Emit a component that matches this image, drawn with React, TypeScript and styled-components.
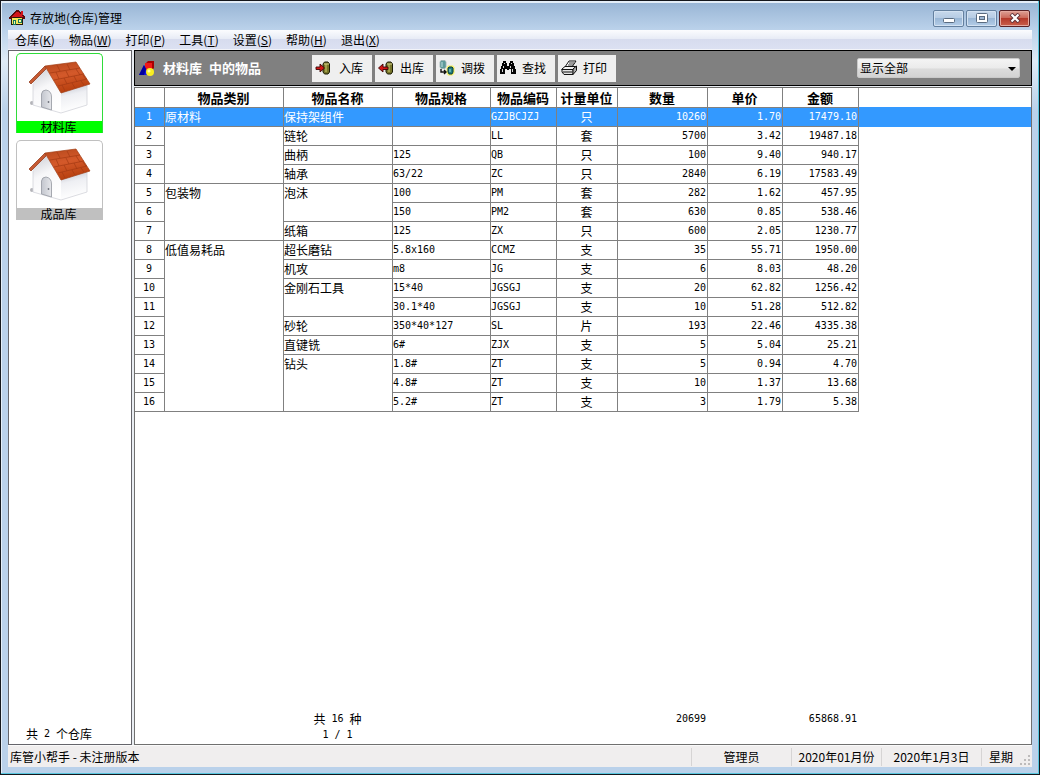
import React from 'react';
import styled, { createGlobalStyle, css } from 'styled-components';

const Global = createGlobalStyle`
  * { box-sizing: border-box; }
  body {
    margin: 0;
    background: #fff;
    color: #000;
    font: 12px/18px 'Noto Sans CJK SC', sans-serif;
  }
  button, select { font: inherit; color: inherit; margin: 0; }
`;

const digits = css`
  font-family: 'DejaVu Sans Mono', 'Noto Sans CJK SC', monospace;
  font-size: 10px;
`;

const Window = styled.div`
  display: flex;
  flex-direction: column;
  min-height: 100vh;
  padding: 0 7px 7px;
  border: 1px solid #15171c;
  background: linear-gradient(#97b4d4, #bad1ea 28px, #dfeaf6 60px, #bad1ea 110px);
  box-shadow: inset -1px -1px #58c6de, inset 1px 2px #e4eef8;
`;

const TitleBar = styled.header`
  display: flex;
  align-items: center;
  height: 29px;
  padding: 5px 2px 0 1px;
`;

const Title = styled.h1`
  flex: 1;
  margin: 0 0 0 5px;
  font-size: 12px;
  font-weight: 400;
`;

const Controls = styled.div`
  display: flex;
  gap: 2px;
`;

const WindowButton = styled.button<{ $danger?: boolean }>`
  display: flex;
  align-items: center;
  justify-content: center;
  width: 31px;
  height: 17px;
  padding: 0;
  border: 1px solid ${p => (p.$danger ? '#5a2226' : '#64809f')};
  border-radius: 2px;
  background: ${p =>
    p.$danger
      ? 'linear-gradient(#dda196, #cc6a5b 45%, #b53a2b 50%, #c9604c)'
      : 'linear-gradient(#c8d9ec, #b6cce4 45%, #9ab7d6 50%, #b4cde8)'};
  box-shadow: inset 0 0 0 1px ${p => (p.$danger ? '#e5a99f' : '#d3e2f2')};
`;

const MenuBar = styled.nav`
  display: flex;
  align-items: center;
  height: 20px;
  border-bottom: 1px solid #f2f3f8;
  background: linear-gradient(#fbfcfe, #e8ecf6 45%, #d7dcee 50%, #dce1f2);
`;

const MenuItem = styled.button`
  padding: 0 7px;
  border: 0;
  background: none;
  line-height: 18px;
`;

const Workspace = styled.main`
  display: flex;
  flex: 1;
  gap: 2px;
  background: #e9edf2;
`;

const Sidebar = styled.aside`
  display: flex;
  flex-direction: column;
  gap: 7px;
  width: 124px;
  padding: 2px 7px 0;
  border: 1px solid #65656b;
  background: #fff;
`;

const StoreCard = styled.button<{ $active?: boolean }>`
  display: flex;
  flex-direction: column;
  width: 87px;
  height: 80px;
  padding: 0;
  border: 1px solid ${p => (p.$active ? '#2fdc3a' : '#c0c0c0')};
  border-bottom: 0;
  border-radius: 5px 5px 0 0;
  background: ${p => (p.$active ? '#0f0' : '#c0c0c0')};
  line-height: 12px;

  svg {
    flex: none;
    border-radius: 4px 4px 0 0;
    background: #fff;
  }
  span {
    align-self: center;
    padding-right: 2px;
  }
`;

const StoreCount = styled.p`
  display: flex;
  gap: 6px;
  margin: auto 0 0;
  padding: 0 10px;
  line-height: 20px;
`;

const Num = styled.span`
  ${digits}
`;

const Content = styled.section`
  display: flex;
  flex: 1;
  flex-direction: column;
  gap: 1px;
  min-width: 0;
`;

const Toolbar = styled.div`
  display: flex;
  align-items: center;
  height: 36px;
  padding: 0 11px 0 4px;
  border: 1px solid #000;
  background: #808080;
`;

const Heading = styled.h2`
  display: flex;
  gap: 7px;
  width: 149px;
  margin: 0 0 0 8px;
  color: #fff;
  font-size: 13px;
  font-weight: 700;
`;

const ToolGroup = styled.div`
  display: flex;
  flex: 1;
  gap: 3px;
`;

const ToolButton = styled.button<{ $wide?: boolean }>`
  display: flex;
  align-items: center;
  justify-content: space-between;
  width: ${p => (p.$wide ? 60 : 58)}px;
  height: 27px;
  padding: 0 9px 0 3px;
  border: 0;
  background: #efefef;
`;

const FilterBox = styled.label`
  position: relative;
  display: flex;
  width: 163px;

  select {
    width: 100%;
    height: 20px;
    padding: 0 2px;
    border: 1px solid #c9c9c9;
    border-radius: 2px;
    appearance: none;
    background: linear-gradient(#f4f4f4, #ebebeb 50%, #dcdcdc 55%, #d2d2d2);
    line-height: 18px;
  }
  svg {
    position: absolute;
    top: 9px;
    right: 4px;
    pointer-events: none;
  }
`;

const ListPanel = styled.div`
  display: flex;
  flex: 1;
  flex-direction: column;
  justify-content: space-between;
  border: 1px solid #70706f;
  background: #fff;
`;

const Table = styled.table`
  width: 100%;
  border-collapse: separate;
  border-spacing: 0;
  table-layout: fixed;
`;

type Align = 'left' | 'center' | 'right';

const HeadCell = styled.th<{ $blank?: boolean }>`
  height: 20px;
  padding: 0 1px 0 0;
  border: 0 solid ${p => (p.$blank ? '#3399ff' : '#808080')};
  border-width: ${p => (p.$blank ? '0 0 1px' : '0 1px 1px 0')};
  font-size: 13px;
  line-height: 19px;
  white-space: nowrap;
`;

const Cell = styled.td<{ $align?: Align; $mono?: boolean; $joined?: boolean }>`
  height: 19px;
  padding: 0 1px 0 0;
  border-right: 1px solid #808080;
  border-bottom: ${p => (p.$joined ? '0' : '1px solid #808080')};
  text-align: ${p => p.$align || 'left'};
  vertical-align: top;
  line-height: 18px;
  white-space: nowrap;
  ${p => p.$mono && digits}
`;

const Filler = styled.td`
  padding: 0;
`;

const Row = styled.tr<{ $selected?: boolean }>`
  ${p => p.$selected && 'background: #3399ff; color: #fff;'}
`;

const TotalCell = styled.td<{ $align?: Align; $mono?: boolean }>`
  height: 16px;
  padding: 0 2px 0 0;
  text-align: ${p => p.$align || 'left'};
  line-height: 16px;
  white-space: nowrap;
  ${p => p.$mono && digits}
`;

const Totals = styled.div`
  padding-bottom: 1px;
`;

const Spaced = styled.span`
  display: flex;
  justify-content: center;
  gap: 6px;
`;

const StatusBar = styled.footer`
  display: flex;
  height: 22px;
  padding: 2px 0 1px 2px;
  border-top: 1px solid #fafafa;
  background: #f0eeee;
`;

const StatusText = styled.span`
  flex: 1;
`;

const StatusCell = styled.span<{ $width: number }>`
  width: ${p => p.$width}px;
  border-left: 1px solid #d6d4d4;
  text-align: center;
`;

const StatusEnd = styled.span`
  display: flex;
  align-items: flex-end;
  justify-content: space-between;
  width: 51px;
  padding-left: 7px;
  border-left: 1px solid #d6d4d4;
`;

const AppIcon = () => (
  <svg width="16" height="16" viewBox="0 0 16 16" shapeRendering="crispEdges">
    <path d="M2 7h12v8H2z" fill="#2a1a08" />
    <path d="M3 8h10v6H3z" fill="#f6e85a" />
    <path d="M4 10h3v5H4zM9 9h4v4H9z" fill="#167a5a" />
    <path d="M5 11h1v3H5zM10 10h2v2h-2z" fill="#fff9a0" />
    <path d="M7 0h2l7 7v2h-2L8 4 2 9H0V7z" fill="#5b0c0c" />
    <path d="M7 2h2l5 5H2zM12 1h2v4h-2z" fill="#d3151b" />
  </svg>
);

const House = () => (
  <svg width="85" height="67" viewBox="0 0 85 67">
    <defs>
      <linearGradient id="roof" x1="0" y1="0" x2="0.3" y2="1">
        <stop offset="0" stopColor="#b5481c" />
        <stop offset="0.5" stopColor="#d4592a" />
        <stop offset="1" stopColor="#b8400f" />
      </linearGradient>
      <linearGradient id="side" x1="0" y1="0" x2="0.2" y2="1">
        <stop offset="0" stopColor="#b4b8c6" />
        <stop offset="0.45" stopColor="#eeeff3" />
        <stop offset="1" stopColor="#fff" />
      </linearGradient>
      <linearGradient id="front" x1="0" y1="0" x2="0.3" y2="1">
        <stop offset="0" stopColor="#c9cbd2" />
        <stop offset="0.5" stopColor="#f7f7f9" />
        <stop offset="1" stopColor="#fff" />
      </linearGradient>
      <linearGradient id="door" x1="0" y1="0" x2="1" y2="0">
        <stop offset="0" stopColor="#c3c6ce" />
        <stop offset="1" stopColor="#e6e7eb" />
      </linearGradient>
    </defs>
    <ellipse cx="15" cy="49" rx="2" ry="2" fill="#b4b4b9" />
    <path d="M44 37L70 29V51L44 59Z" fill="url(#side)" />
    <path d="M16 27L29 14L44 37V59L16 51Z" fill="url(#front)" />
    <path d="M16 30V51L44 59L70 51V30" fill="none" stroke="#d2d3d9" strokeWidth="0.8" />
    <path d="M24.500 53V40Q25 36 29 36Q34.500 37 34.500 43V56Z" fill="url(#door)" stroke="#9da0a8" strokeWidth="0.9" />
    <circle cx="31.500" cy="48" r="0.9" fill="#6f727b" />
    <path d="M28 12L12 28L14 30L29 15Z" fill="#c65a32" stroke="#8c3214" strokeWidth="0.7" />
    <path d="M28 12L59 8L73 30L44 39Z" fill="url(#roof)" stroke="#a03c12" strokeWidth="0.7" />
    <path
      d="M33 19L63 14M37 26L67 20M41 32L70 25M40 11L43 17M50 10L53 16M39 18L42 25M49 17L52 23M59 15L63 21M47 24L50 30M57 22L60 28M66 21L69 25M45 31L48 37M55 29L58 34M64 27L67 31"
      fill="none"
      stroke="#a33a12"
      strokeWidth="0.7"
    />
  </svg>
);

const ShapesIcon = () => (
  <svg width="16" height="16" viewBox="0 0 16 16">
    <path d="M7 3L9 1H15V8L13 10H7Z" fill="#a80000" />
    <path d="M6 3H13V10H6Z" fill="#f01818" />
    <path d="M5 5L10 15H0Z" fill="#1515e0" />
    <path d="M5 5L7 9L5 15H0Z" fill="#0000a0" />
    <circle cx="11" cy="12" r="4" fill="#f8ee20" />
    <circle cx="10" cy="11" r="1.500" fill="#ffffb0" />
  </svg>
);

const BarrelIcon = ({ out }: { out?: boolean }) => (
  <svg width="16" height="16" viewBox="0 0 16 16">
    <path d="M8 4L9.500 2H13L14.500 4V12L13 14H9.500L8 12Z" fill="#77752a" stroke="#1b1b05" />
    <path d="M10 4H12V12H10Z" fill="#a3a14c" />
    <path d="M9 4H14" stroke="#d2d08a" />
    {out ? (
      <path d="M0.500 8L5 4V7H10V9.500H5V12Z" fill="#d31616" stroke="#3a0505" strokeWidth="0.9" />
    ) : (
      <path d="M1 7H5V4L9.500 8L5 12V9.500H1Z" fill="#d31616" stroke="#3a0505" strokeWidth="0.9" />
    )}
  </svg>
);

const TransferIcon = () => (
  <svg width="16" height="16" viewBox="0 0 16 16">
    <path d="M1 2L2 0.500H6L7 2V7L6 8.500H2L1 7Z" fill="#5d9a9a" stroke="#9ab0b0" strokeWidth="0.8" />
    <path d="M3 2V7" stroke="#c2e2e2" />
    <path d="M9 5.500H14L15.500 7.500V13L13.500 15.500H9L7.500 13V8Z" fill="#f4f060" />
    <path d="M9 8L10 7H13L14 8V12L13 14H10L9 12Z" fill="#1f7f80" stroke="#0b3b3c" />
    <path d="M11 9V12" stroke="#a5e0e0" />
    <path d="M2 9V12H7M5 10L7 12L5 14" fill="none" stroke="#101010" strokeWidth="1.400" />
  </svg>
);

const BinocularsIcon = () => (
  <svg width="16" height="16" viewBox="0 0 16 16" shapeRendering="crispEdges">
    <path
      d="M3 1h3v2h1v3h2V3h1V1h3v2h1v3h1v3h1v5h-5V9H9v1H7V9H5v5H0V9h1V6h1V3h1z"
      fill="#050505"
    />
    <path d="M4 3h1v1H4zM3 6h1v2H3zM2 9h1v3H2zM11 3h1v1h-1zM10 6h1v2h-1zM12 9h1v3h-1z" fill="#d8d8d8" />
  </svg>
);

const PrinterIcon = () => (
  <svg width="17" height="16" viewBox="0 0 17 16">
    <path d="M4 7L8 1H15L11 7Z" fill="#fff" stroke="#111" />
    <path d="M8 3H13M7 5H12" stroke="#222" strokeWidth="0.9" />
    <path d="M1 9L4 6.500H15L12 9.500H1Z" fill="#f3f3f3" stroke="#111" />
    <path d="M1 9V12L3 14.500H12V9.500H1Z" fill="#e3e3e3" stroke="#111" />
    <path d="M12 9L15.500 6V10.500L12 14.500Z" fill="#aaa" stroke="#111" />
    <path d="M2 12H11" stroke="#111" />
  </svg>
);

const MinimizeIcon = () => (
  <svg width="12" height="10" viewBox="0 0 12 10">
    <rect x="0.500" y="5.500" width="11" height="4" rx="1" fill="#fff" stroke="#596b80" />
  </svg>
);

const MaximizeIcon = () => (
  <svg width="12" height="10" viewBox="0 0 12 10">
    <rect x="0.500" y="0.500" width="11" height="9" rx="1" fill="#fff" stroke="#596b80" />
    <rect x="3.500" y="3.500" width="5" height="3" fill="#9db6d2" stroke="#596b80" />
  </svg>
);

const CloseIcon = () => (
  <svg width="12" height="10" viewBox="0 0 12 10">
    <path d="M2 1L10 9M10 1L2 9" stroke="#5d3038" strokeWidth="4" />
    <path d="M2.500 1.500L9.500 8.500M9.500 1.500L2.500 8.500" stroke="#fff" strokeWidth="2.200" />
  </svg>
);

const Grip = () => (
  <svg width="12" height="12" viewBox="0 0 12 12" shapeRendering="crispEdges">
    <path d="M8 1h2v2H8zM8 5h2v2H8zM4 5h2v2H4zM8 9h2v2H8zM4 9h2v2H4zM0 9h2v2H0z" fill="#bdbbbb" />
  </svg>
);

const menus = [
  ['仓库', 'K'],
  ['物品', 'W'],
  ['打印', 'P'],
  ['工具', 'T'],
  ['设置', 'S'],
  ['帮助', 'H'],
  ['退出', 'X'],
];

const tools = [
  { label: '入库', icon: <BarrelIcon /> },
  { label: '出库', icon: <BarrelIcon out /> },
  { label: '调拨', icon: <TransferIcon /> },
  { label: '查找', icon: <BinocularsIcon /> },
  { label: '打印', icon: <PrinterIcon /> },
];

const headings = ['', '物品类别', '物品名称', '物品规格', '物品编码', '计量单位', '数量', '单价', '金额'];
const widths = [30, 119, 109, 98, 66, 61, 90, 75, 76];

/* category, name, spec, code, unit, quantity, price, amount */
const items = [
  ['原材料', '保持架组件', '', 'GZJBCJZJ', '只', '10260', '1.70', '17479.10'],
  ['原材料', '链轮', '', 'LL', '套', '5700', '3.42', '19487.18'],
  ['原材料', '曲柄', '125', 'QB', '只', '100', '9.40', '940.17'],
  ['原材料', '轴承', '63/22', 'ZC', '只', '2840', '6.19', '17583.49'],
  ['包装物', '泡沫', '100', 'PM', '套', '282', '1.62', '457.95'],
  ['包装物', '泡沫', '150', 'PM2', '套', '630', '0.85', '538.46'],
  ['包装物', '纸箱', '125', 'ZX', '只', '600', '2.05', '1230.77'],
  ['低值易耗品', '超长磨钻', '5.8x160', 'CCMZ', '支', '35', '55.71', '1950.00'],
  ['低值易耗品', '机攻', 'm8', 'JG', '支', '6', '8.03', '48.20'],
  ['低值易耗品', '金刚石工具', '15*40', 'JGSGJ', '支', '20', '62.82', '1256.42'],
  ['低值易耗品', '金刚石工具', '30.1*40', 'JGSGJ', '支', '10', '51.28', '512.82'],
  ['低值易耗品', '砂轮', '350*40*127', 'SL', '片', '193', '22.46', '4335.38'],
  ['低值易耗品', '直键铣', '6#', 'ZJX', '支', '5', '5.04', '25.21'],
  ['低值易耗品', '钻头', '1.8#', 'ZT', '支', '5', '0.94', '4.70'],
  ['低值易耗品', '钻头', '4.8#', 'ZT', '支', '10', '1.37', '13.68'],
  ['低值易耗品', '钻头', '5.2#', 'ZT', '支', '3', '1.79', '5.38'],
];

const Columns = () => (
  <colgroup>
    {widths.map((w, i) => (
      <col key={i} style={{ width: w }} />
    ))}
    <col />
  </colgroup>
);

const aligns: Align[] = ['left', 'left', 'left', 'left', 'center', 'right', 'right', 'right'];

const ItemTable = () => (
  <Table>
    <Columns />
    <thead>
      <tr>
        {headings.map((h, i) => (
          <HeadCell key={i}>{h}</HeadCell>
        ))}
        <HeadCell $blank />
      </tr>
    </thead>
    <tbody>
      {items.map((item, r) => (
        <Row key={r} $selected={r === 0}>
          <Cell $align="center" $mono>
            {r + 1}
          </Cell>
          {item.map((value, c) => {
            const grouped = c < 2;
            const above = items[r - 1];
            const below = items[r + 1];
            return (
              <Cell
                key={c}
                $align={aligns[c]}
                $mono={!grouped && c !== 4}
                $joined={grouped && r > 0 && !!below && below[c] === value}
              >
                {grouped && above && above[c] === value ? '' : value}
              </Cell>
            );
          })}
          <Filler />
        </Row>
      ))}
    </tbody>
  </Table>
);

const TotalsTable = () => (
  <Totals>
    <Table>
      <Columns />
      <tbody>
        <tr>
          <TotalCell colSpan={2} />
          <TotalCell $align="center">
            <Spaced>
              共 <Num>16</Num> 种
            </Spaced>
          </TotalCell>
          <TotalCell colSpan={3} />
          <TotalCell $align="right" $mono>20699</TotalCell>
          <TotalCell />
          <TotalCell $align="right" $mono>65868.91</TotalCell>
          <TotalCell />
        </tr>
        <tr>
          <TotalCell colSpan={2} />
          <TotalCell $align="center" $mono>1 / 1</TotalCell>
          <TotalCell colSpan={7} />
        </tr>
      </tbody>
    </Table>
  </Totals>
);

export default function App() {
  return (
    <>
      <Global />
      <Window>
        <TitleBar>
          <AppIcon />
          <Title>存放地(仓库)管理</Title>
          <Controls>
            <WindowButton aria-label="最小化"><MinimizeIcon /></WindowButton>
            <WindowButton aria-label="最大化"><MaximizeIcon /></WindowButton>
            <WindowButton aria-label="关闭" $danger><CloseIcon /></WindowButton>
          </Controls>
        </TitleBar>
        <MenuBar>
          {menus.map(([name, key]) => (
            <MenuItem key={key}>
              {name}(<u>{key}</u>)
            </MenuItem>
          ))}
        </MenuBar>
        <Workspace>
          <Sidebar>
            <StoreCard $active>
              <House />
              <span>材料库</span>
            </StoreCard>
            <StoreCard>
              <House />
              <span>成品库</span>
            </StoreCard>
            <StoreCount>
              共 <Num>2</Num> 个仓库
            </StoreCount>
          </Sidebar>
          <Content>
            <Toolbar>
              <ShapesIcon />
              <Heading>
                <span>材料库</span>
                <span>中的物品</span>
              </Heading>
              <ToolGroup>
                {tools.map((tool, i) => (
                  <ToolButton key={tool.label} $wide={i === 0}>
                    {tool.icon}
                    {tool.label}
                  </ToolButton>
                ))}
              </ToolGroup>
              <FilterBox>
                <select aria-label="显示范围" defaultValue="all">
                  <option value="all">显示全部</option>
                </select>
                <svg width="8" height="4" viewBox="0 0 8 4">
                  <path d="M0 0H8L4 4Z" />
                </svg>
              </FilterBox>
            </Toolbar>
            <ListPanel>
              <ItemTable />
              <TotalsTable />
            </ListPanel>
          </Content>
        </Workspace>
        <StatusBar>
          <StatusText>库管小帮手 - 未注册版本</StatusText>
          <StatusCell $width={100}>管理员</StatusCell>
          <StatusCell $width={90}>2020年01月份</StatusCell>
          <StatusCell $width={100}>2020年1月3日</StatusCell>
          <StatusEnd>
            星期
            <Grip />
          </StatusEnd>
        </StatusBar>
      </Window>
    </>
  );
}
